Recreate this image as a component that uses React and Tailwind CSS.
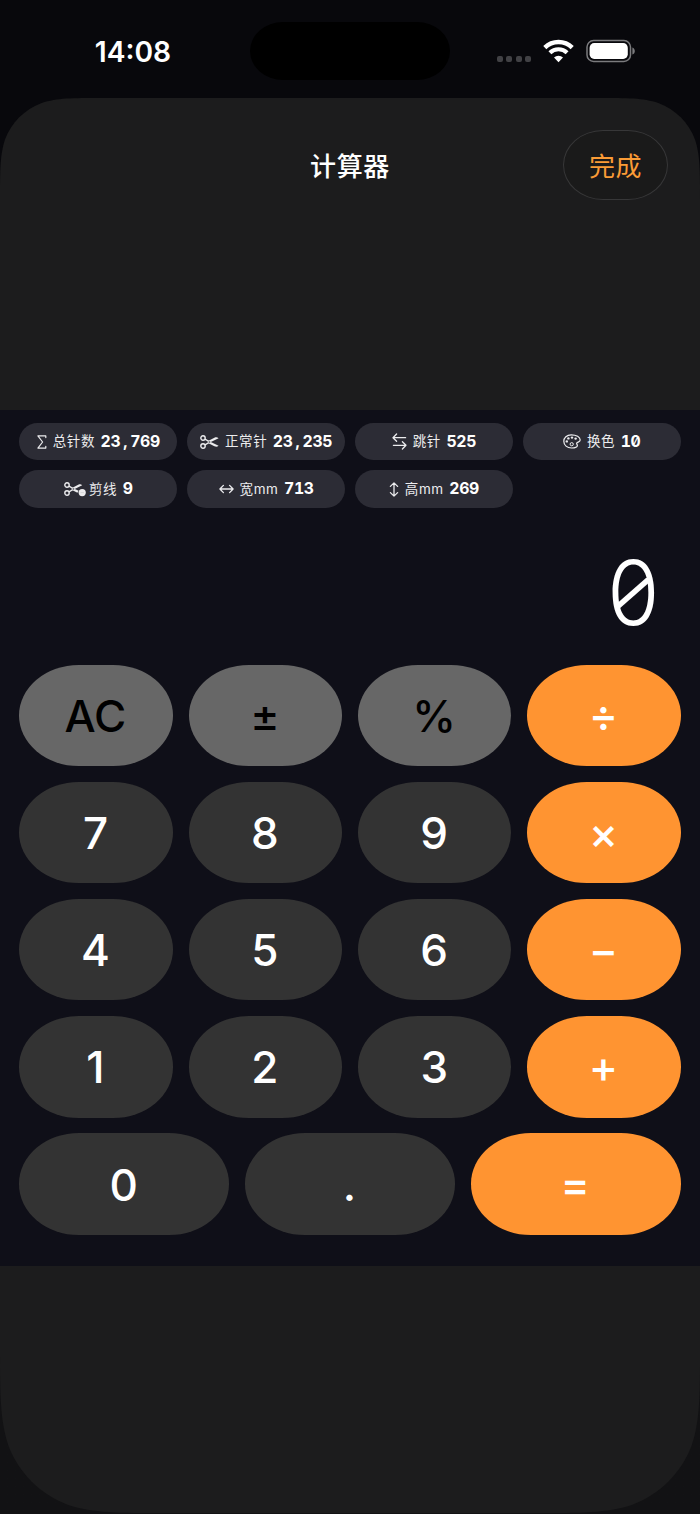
import { useState } from 'react'

const SigmaIcon = () => (
  <svg width="10" height="14" viewBox="0 0 10 14" fill="none" stroke="currentColor" strokeWidth="1.2" strokeLinecap="round" strokeLinejoin="round">
    <path d="M8.8 2.6V.9H.9L5.6 7 .9 13.1h7.9v-1.7" />
  </svg>
)

const ScissorsIcon = () => (
  <svg width="19" height="14" viewBox="0 0 19 14" fill="none" stroke="currentColor" strokeWidth="1.4">
    <circle cx="3" cy="3" r="2.2" />
    <circle cx="3" cy="11" r="2.2" />
    <path d="M5 4.1 9 6.5M5 9.9 9 7.5" />
    <path d="M7.2 5.2 18.6 10.8c-1.3 1.2-2.8 1.1-4.2.5L7 7.6ZM7.2 8.8 18.6 3.2c-1.3-1.2-2.8-1.1-4.2-.5L7 6.4Z" fill="currentColor" stroke="none" />
  </svg>
)

const TrimIcon = () => (
  <svg width="22" height="15" viewBox="0 0 22 15" fill="none" stroke="currentColor" strokeWidth="1.4">
    <circle cx="3" cy="3" r="2.2" />
    <circle cx="3" cy="11" r="2.2" />
    <path d="M5 4.1 9 6.5M5 9.9 9 7.5" />
    <path d="M7.2 5.2 14.6 8.7 13.4 10.8 7 7.6ZM7.2 8.8 18.2 3.2c-1.2-1.2-2.6-1.1-4-.5L7 6.4Z" fill="currentColor" stroke="none" />
    <circle cx="18.2" cy="10.6" r="3.6" fill="currentColor" stroke="none" />
    <path d="M16.5 10.6h3.4" stroke="#c4c4c8" strokeWidth=".6" />
  </svg>
)

const SwapIcon = () => (
  <svg width="15" height="17" viewBox="0 0 15 17" fill="none" stroke="currentColor" strokeWidth="1.3" strokeLinecap="round" strokeLinejoin="round">
    <path d="M4.6 1 1 4.7l3.6 3.6M1 4.7h12.6M10.4 8.7l3.6 3.6-3.6 3.7M14 12.3H1.4" />
  </svg>
)

const PaletteIcon = () => (
  <svg width="18" height="15" viewBox="0 0 18 15" fill="none" stroke="currentColor" strokeWidth="1.2">
    <path d="M8.2.8C3.8.8.8 3.7.8 7.3c0 3.9 3.3 6.7 7.8 6.7 3.4 0 5.8-1 5.8-2.5 0-1-.8-1.3-.8-2 0-1.9 3.6-.9 3.6-3.5C17.2 3 13.4.8 8.2.8Z" />
    <circle cx="8.7" cy="10.2" r="1.6" strokeWidth="1" />
    <g fill="currentColor" stroke="none">
      <circle cx="3.8" cy="7.4" r="1.2" />
      <circle cx="5.4" cy="4.4" r="1.2" />
      <circle cx="9" cy="3.6" r="1.2" />
      <circle cx="12.6" cy="4.6" r="1.2" />
    </g>
  </svg>
)

const WidthIcon = () => (
  <svg width="15" height="10" viewBox="0 0 15 10" fill="none" stroke="currentColor" strokeWidth="1.3" strokeLinecap="round" strokeLinejoin="round">
    <path d="M4.4 1.4.9 5l3.5 3.6M10.6 1.4 14.1 5l-3.5 3.6M.9 5h13.2" />
  </svg>
)

const HeightIcon = () => (
  <svg width="10" height="15" viewBox="0 0 10 15" fill="none" stroke="currentColor" strokeWidth="1.3" strokeLinecap="round" strokeLinejoin="round">
    <path d="M1.4 4.4 5 .9l3.6 3.5M1.4 10.6 5 14.1l3.6-3.5M5 .9v13.2" />
  </svg>
)

const stats = [
  { icon: SigmaIcon, label: '总针数', value: '23,769', gap: 'gap-[6px]' },
  { icon: ScissorsIcon, label: '正常针', value: '23,235', gap: 'gap-[6px]' },
  { icon: SwapIcon, label: '跳针', value: '525', gap: 'gap-[6px]' },
  { icon: PaletteIcon, label: '换色', value: '10', gap: 'gap-[6px]' },
  { icon: TrimIcon, label: '剪线', value: '9', gap: 'gap-[3px]' },
  { icon: WidthIcon, label: '宽mm', value: '713', gap: 'gap-[6px]' },
  { icon: HeightIcon, label: '高mm', value: '269', gap: 'gap-[6px]' },
]

const keyRows = [
  ['AC', '±', '%', '÷'],
  ['7', '8', '9', '×'],
  ['4', '5', '6', '−'],
  ['1', '2', '3', '+'],
  ['0', '.', '='],
]

const keyColor = (key) => {
  if (['÷', '×', '−', '+', '='].includes(key)) return 'bg-[#ff9431] text-white pr-px'
  if (key === '±') return 'bg-[#676767] text-black pr-px'
  if (['AC', '%'].includes(key)) return 'bg-[#676767] text-black pt-px pr-px'
  return 'bg-[#333333] text-white pt-px pr-px'
}

const StatusBar = () => (
  <div className="flex h-[98px] items-start text-white">
    <div className="mt-[35px] ml-[93px] w-[80px] text-center text-[28.2px] leading-[34px] font-[580]">14:08</div>
    <div className="mt-[22px] ml-[77px] h-[58px] w-[200px] rounded-[33px/29px] bg-black"></div>
    <div className="mt-[56px] ml-[46.5px] flex gap-[3.4px]">
      {[0, 1, 2, 3].map((dot) => (
        <span key={dot} className="h-[6px] w-[6.2px] rounded-[2px] bg-[#414145]"></span>
      ))}
    </div>
    <svg className="mt-[39px] ml-[11.5px]" width="31" height="24" viewBox="0 0 31 24" fill="none" stroke="white">
      <path d="M1.8 8.6a19.6 19.6 0 0 1 27.4 0" strokeWidth="4.4" />
      <path d="M6.9 13.8a12.3 12.3 0 0 1 17.2 0" strokeWidth="4.1" />
      <path d="M15.5 23.2 11 18.6a6.5 6.5 0 0 1 9 0Z" fill="white" stroke="none" />
    </svg>
    <svg className="mt-[39px] ml-[12px]" width="50" height="24" viewBox="0 0 50 24" fill="none">
      <rect x="1" y="1.5" width="43.5" height="21" rx="6.6" stroke="#7b7b7e" strokeWidth="1.5" />
      <rect x="3.6" y="4.1" width="38.2" height="15.8" rx="4.6" fill="white" />
      <path d="M46.4 8.4c1.6.6 2.4 2 2.4 3.6s-.8 3-2.4 3.6Z" fill="#7b7b7e" />
    </svg>
  </div>
)

// every character takes the same advance, the comma too
const MonoValue = ({ value }) => (
  <span className="flex text-[15.8px] leading-none font-bold text-white tabular-nums slashed-zero">
    {value.split('').map((char, i) => (
      <span key={i} className="w-[9.9px] text-center">{char}</span>
    ))}
  </span>
)

const StatChip = ({ icon: Icon, label, value, gap }) => (
  <div className="flex h-[37.7px] items-center justify-center gap-[5.5px] rounded-full bg-[#2c2c35] pt-px text-[#ececee]">
    <div className={`flex items-center ${gap}`}>
      <Icon />
      <span className="text-[13.5px] leading-none tracking-[0.6px]">{label}</span>
    </div>
    <MonoValue value={value} />
  </div>
)

const DisplayChar = ({ char }) => (
  <span className="relative inline-block w-[53px] text-center">
    <span className="inline-block scale-x-95">{char}</span>
    {char === '0' && (
      <svg className="absolute top-[30px] left-[8px]" width="37" height="31" viewBox="0 0 37 31" stroke="white" strokeWidth="5.6">
        <path d="M2.5 29.5 34.5 1.5" />
      </svg>
    )}
  </span>
)

const App = () => {
  const [display, setDisplay] = useState('0')

  const handleKey = (key) => {
    if (key === 'AC') {
      setDisplay('0')
    } else if (/[0-9.]/.test(key)) {
      setDisplay(display === '0' && key !== '.' ? key : display + key)
    }
  }

  return (
    <div className="h-[1514px] w-[700px] overflow-hidden bg-linear-to-b from-[#08080c] from-50% to-[#121214] to-90% font-['Inter','Noto_Sans_CJK_SC',sans-serif]">
      <StatusBar />

      <main className="flex h-[1416px] flex-col bg-[#1c1c1d] [clip-path:path('M0_100.9C0_71.8_0_57.3_4.9_41.7C11.2_24.6_24.6_11.2_41.7_4.9C57.3_0_71.8_0_100.9_0L599.1_0C628.2_0_642.7_0_658.3_4.9C675.4_11.2_688.8_24.6_695.1_41.7C700_57.3_700_71.8_700_100.9L700_1250C700_1297.4_700_1321.2_691.9_1346.8C681.7_1374.7_659.7_1396.7_631.8_1406.9C606.2_1415_582.4_1415_534.9_1415L165.1_1415C117.6_1415_93.8_1415_68.2_1406.9C40.3_1396.7_18.3_1374.7_8.1_1346.8C0_1321.2_0_1297.4_0_1250Z')]">
        <header className="grid h-[312px] grid-cols-3 items-start px-8 pt-8">
          <h1 className="col-start-2 pt-[1.5px] text-center text-[26px] leading-[69px] font-medium tracking-[0.6px] text-white">计算器</h1>
          <button className="h-[70px] w-[105px] justify-self-end rounded-[40px/35px] border border-[#373738] bg-[#1a1a1a] pt-[2px] text-[26px] tracking-[0.6px] text-[#fb9c36]">
            完成
          </button>
        </header>

        <section className="flex h-[856px] flex-col bg-[#0f0f18] px-[19.3px] pt-[12.5px]">
          <div className="grid grid-cols-4 gap-[9.8px]">
            {stats.map((stat) => (
              <StatChip key={stat.label} {...stat} />
            ))}
          </div>

          <div className="flex h-[157px] items-center justify-end pt-[13px] pr-[21.5px]">
            <span className="text-[89px] leading-none font-light text-white">
              {display.split('').map((char, i) => (
                <DisplayChar key={i} char={char} />
              ))}
            </span>
          </div>

          <div className="flex flex-col gap-[15.8px]">
            {keyRows.map((row) => (
              <div key={row[0]} className="grid auto-cols-fr grid-flow-col gap-4">
                {row.map((key) => (
                  <button
                    key={key}
                    onClick={() => handleKey(key)}
                    className={`h-[101.4px] rounded-[60px/50.7px] text-[44px] font-[460] ${keyColor(key)}`}
                  >
                    {key}
                  </button>
                ))}
              </div>
            ))}
          </div>
        </section>
      </main>
    </div>
  )
}

export default App
